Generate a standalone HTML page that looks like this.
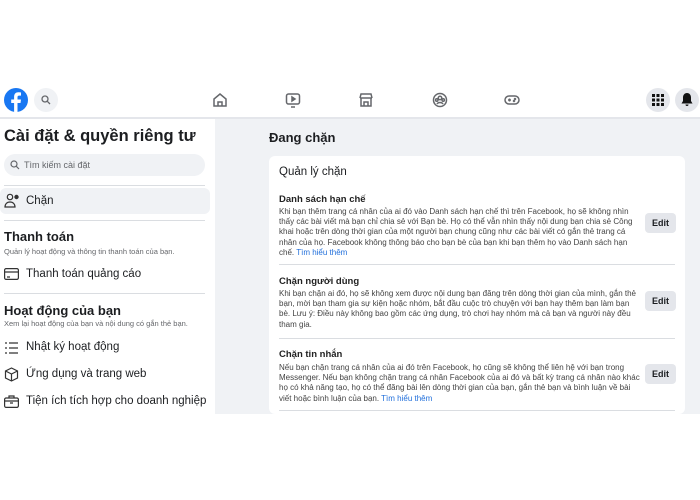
<!DOCTYPE html>
<html><head><meta charset="utf-8"><style>
*{margin:0;padding:0;box-sizing:border-box}
body{width:700px;height:500px;background:#fff;font-family:"Liberation Sans",sans-serif;position:relative;overflow:hidden;color:#1c1e21}
.a{position:absolute}
.gray{left:215px;top:117px;width:485px;height:297px;background:#f0f2f5}
.hdr{left:0;top:117px;width:700px;height:2px;background:#e4e6eb}
.card{left:269px;top:156px;width:416px;height:258px;background:#fff;border-radius:6px}
.t{font-size:8px;line-height:10.2px;color:#444;white-space:nowrap}
.h{font-size:9.5px;font-weight:bold;color:#222}
.edit{width:31px;height:20px;background:#e4e6eb;border-radius:4px;font-size:9px;font-weight:bold;text-align:center;line-height:20px}
.div{height:1px;background:#dadde1}
.lk{color:#216fdb}
.it{font-size:11.5px;color:#1c1e21}
svg{position:absolute}
</style></head><body>
<div class="a gray"></div><div class="a hdr"></div>
<svg style="left:4px;top:88px" width="24" height="24" viewBox="0 0 24 24"><circle cx="12" cy="12" r="12" fill="#1877f2"/><path d="M13.5 24V15h3l.5-3.5h-3.5V9.3c0-1 .3-1.7 1.7-1.7H17V4.5c-.3 0-1.4-.2-2.6-.2-2.6 0-4.3 1.6-4.3 4.5v2.7H7.2V15h2.9v9z" fill="#fff"/></svg>
<div class="a" style="left:34px;top:88px;width:24px;height:24px;border-radius:50%;background:#f0f2f5"></div>
<svg style="left:41px;top:95px" width="10" height="10" viewBox="0 0 10 10"><circle cx="4" cy="4" r="3" stroke="#65676b" stroke-width="1.3" fill="none"/><path d="M6.3 6.3L9 9" stroke="#65676b" stroke-width="1.3"/></svg>
<svg style="left:212px;top:92px" width="16" height="16" viewBox="0 0 16 16" fill="none" stroke="#65676b" stroke-width="1.5"><path d="M2 14V7l6-5 6 5v7zM6 14v-4h4v4"/></svg>
<svg style="left:285px;top:92px" width="16" height="16" viewBox="0 0 16 16" fill="none" stroke="#65676b" stroke-width="1.5"><rect x="1.5" y="2" width="13" height="10" rx="2"/><path d="M6 15h4"/><path d="M7 5l3 2-3 2z" fill="#65676b"/></svg>
<svg style="left:358px;top:92px" width="16" height="16" viewBox="0 0 16 16" fill="none" stroke="#65676b" stroke-width="1.5"><path d="M2 6l1-4h10l1 4M2 6h12M3 6v8h10V6M6 14v-4h4v4"/></svg>
<svg style="left:432px;top:92px" width="16" height="16" viewBox="0 0 16 16" fill="none" stroke="#65676b" stroke-width="1.5"><circle cx="8" cy="8" r="6.5"/><circle cx="8" cy="6" r="1.8"/><circle cx="4.8" cy="8" r="1.2"/><circle cx="11.2" cy="8" r="1.2"/><path d="M5 12c1-2 5-2 6 0"/></svg>
<svg style="left:504px;top:92px" width="16" height="16" viewBox="0 0 16 16" fill="none" stroke="#65676b" stroke-width="1.5"><rect x="1" y="4" width="14" height="8" rx="4"/><path d="M4 8h3M5.5 6.5v3"/><circle cx="11" cy="7" r=".5"/><circle cx="10" cy="9" r=".5"/></svg>
<div class="a" style="left:646px;top:88px;width:24px;height:24px;border-radius:50%;background:#e4e6eb"></div>
<svg style="left:652px;top:94px" width="12" height="12" viewBox="0 0 12 12" fill="#111"><rect x="0" y="0" width="3" height="3"/><rect x="4.5" y="0" width="3" height="3"/><rect x="9" y="0" width="3" height="3"/><rect x="0" y="4.5" width="3" height="3"/><rect x="4.5" y="4.5" width="3" height="3"/><rect x="9" y="4.5" width="3" height="3"/><rect x="0" y="9" width="3" height="3"/><rect x="4.5" y="9" width="3" height="3"/><rect x="9" y="9" width="3" height="3"/></svg>
<div class="a" style="left:675px;top:88px;width:24px;height:24px;border-radius:50%;background:#e4e6eb"></div>
<svg style="left:681px;top:93px" width="12" height="14" viewBox="0 0 12 14" fill="#111"><path d="M6 0c2.5 0 4 2 4 4.5V8l1.5 2.5h-11L2 8V4.5C2 2 3.5 0 6 0zM4.5 11.5h3a1.5 1.5 0 01-3 0z"/></svg>
<div class="a" style="left:4px;top:127px;font-size:16.5px;font-weight:bold">Cài đặt &amp; quyền riêng tư</div>
<div class="a" style="left:4px;top:154px;width:201px;height:22px;border-radius:11px;background:#f0f2f5"></div>
<svg style="left:10px;top:160px" width="10" height="10" viewBox="0 0 10 10"><circle cx="4" cy="4" r="3" stroke="#65676b" stroke-width="1.2" fill="none"/><path d="M6.3 6.3L9 9" stroke="#65676b" stroke-width="1.2"/></svg>
<div class="a" style="left:24px;top:160px;font-size:9px;color:#65676b">Tìm kiếm cài đặt</div>
<div class="a div" style="left:4px;top:185px;width:201px"></div>
<div class="a" style="left:0;top:188px;width:210px;height:26px;border-radius:6px;background:#f0f2f5"></div>
<svg style="left:4px;top:193px" width="16" height="15" viewBox="0 0 16 15" fill="none" stroke="#333" stroke-width="1.2"><circle cx="6" cy="4" r="2.7"/><path d="M1 14c0-3 2-5 5-5s5 2 5 5z"/><circle cx="12.5" cy="4" r="1.6" fill="#333"/></svg>
<div class="a it" style="left:26px;top:195px">Chặn</div>
<div class="a div" style="left:4px;top:220px;width:201px"></div>
<div class="a" style="left:4px;top:229px;font-size:13px;font-weight:bold">Thanh toán</div>
<div class="a" style="left:4px;top:247px;font-size:7.5px;color:#65676b">Quản lý hoạt động và thông tin thanh toán của bạn.</div>
<svg style="left:4px;top:268px" width="15" height="12" viewBox="0 0 15 12" fill="none" stroke="#333" stroke-width="1.2"><rect x="0.6" y="0.6" width="13.8" height="10.8" rx="1.5"/><path d="M1 4h13M3 9h3"/></svg>
<div class="a it" style="left:26px;top:268px">Thanh toán quảng cáo</div>
<div class="a div" style="left:4px;top:293px;width:201px"></div>
<div class="a" style="left:4px;top:303px;font-size:13px;font-weight:bold">Hoạt động của bạn</div>
<div class="a" style="left:4px;top:319px;font-size:7.5px;color:#65676b">Xem lại hoạt động của bạn và nội dung có gắn thẻ bạn.</div>
<svg style="left:5px;top:342px" width="13" height="12" viewBox="0 0 13 12" fill="none" stroke="#333" stroke-width="1.2"><path d="M0 1h2M4 1h9M0 6h2M4 6h9M0 11h2M4 11h9"/></svg>
<div class="a it" style="left:26px;top:341px">Nhật ký hoạt động</div>
<svg style="left:4px;top:367px" width="15" height="15" viewBox="0 0 15 15" fill="none" stroke="#333" stroke-width="1.2"><path d="M7.5 1l6 3v7l-6 3-6-3V4zM1.5 4l6 3 6-3M7.5 7v7"/></svg>
<div class="a it" style="left:26px;top:368px">Ứng dụng và trang web</div>
<svg style="left:4px;top:395px" width="15" height="13" viewBox="0 0 15 13" fill="none" stroke="#333" stroke-width="1.2"><rect x="0.6" y="3" width="13.8" height="9.4" rx="1.5"/><path d="M5 3V1h5v2M1 6h13M6 8h3"/></svg>
<div class="a it" style="left:26px;top:395px">Tiện ích tích hợp cho doanh nghiệp</div>
<div class="a" style="left:269px;top:130px;font-size:13px;font-weight:bold">Đang chặn</div>
<div class="a card"></div>
<div class="a" style="left:279px;top:166px;font-size:11.5px">Quản lý chặn</div>
<div class="a h" style="left:279px;top:194px">Danh sách hạn chế</div>
<div class="a t" style="left:279px;top:207px">Khi bạn thêm trang cá nhân của ai đó vào Danh sách hạn chế thì trên Facebook, họ sẽ không nhìn<br>thấy các bài viết mà bạn chỉ chia sẻ với Bạn bè. Họ có thể vẫn nhìn thấy nội dung bạn chia sẻ Công<br>khai hoặc trên dòng thời gian của một người bạn chung cũng như các bài viết có gắn thẻ trang cá<br>nhân của họ. Facebook không thông báo cho bạn bè của bạn khi bạn thêm họ vào Danh sách hạn<br>chế. <span class="lk">Tìm hiểu thêm</span></div>
<div class="a edit" style="left:645px;top:213px">Edit</div>
<div class="a div" style="left:279px;top:264px;width:396px"></div>
<div class="a h" style="left:279px;top:276px">Chặn người dùng</div>
<div class="a t" style="left:279px;top:289px">Khi bạn chặn ai đó, họ sẽ không xem được nội dung bạn đăng trên dòng thời gian của mình, gắn thẻ<br>bạn, mời bạn tham gia sự kiện hoặc nhóm, bắt đầu cuộc trò chuyện với bạn hay thêm bạn làm bạn<br>bè. Lưu ý: Điều này không bao gồm các ứng dụng, trò chơi hay nhóm mà cả bạn và người này đều<br>tham gia.</div>
<div class="a edit" style="left:645px;top:291px">Edit</div>
<div class="a div" style="left:279px;top:338px;width:396px"></div>
<div class="a h" style="left:279px;top:349px">Chặn tin nhắn</div>
<div class="a t" style="left:279px;top:363px">Nếu bạn chặn trang cá nhân của ai đó trên Facebook, họ cũng sẽ không thể liên hệ với bạn trong<br>Messenger. Nếu bạn không chặn trang cá nhân Facebook của ai đó và bất kỳ trang cá nhân nào khác<br>họ có khả năng tạo, họ có thể đăng bài lên dòng thời gian của bạn, gắn thẻ bạn và bình luận về bài<br>viết hoặc bình luận của bạn. <span class="lk">Tìm hiểu thêm</span></div>
<div class="a edit" style="left:645px;top:364px">Edit</div>
<div class="a div" style="left:279px;top:410px;width:396px"></div>
</body></html>
